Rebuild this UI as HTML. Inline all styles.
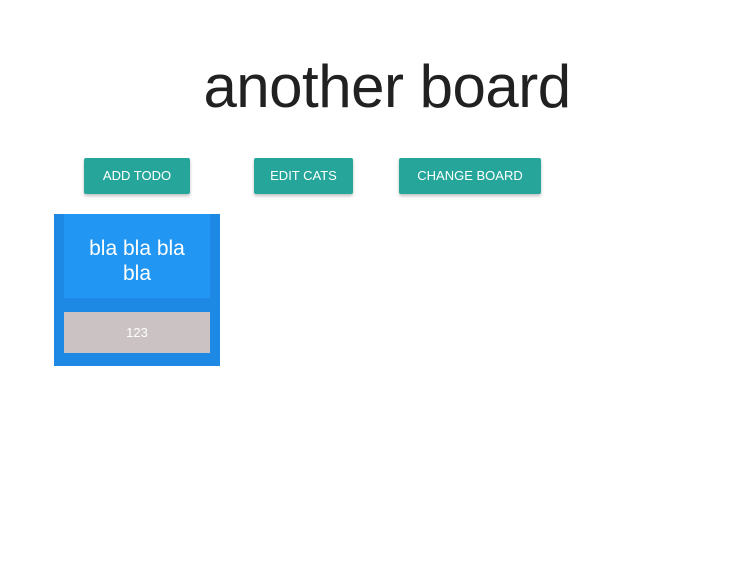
<!DOCTYPE html>
<html><head><meta charset="utf-8"><style>
body{margin:0;width:747px;height:562px;background:#fff;font-family:"Liberation Sans",sans-serif;position:relative;overflow:hidden}
h1{position:absolute;left:0;width:774px;top:52px;margin:0;text-align:center;font-weight:300;font-size:60px;line-height:70px;color:#212121;letter-spacing:-0.5px}
.btn{position:absolute;top:158px;height:36px;background:#26a69a;color:#fff;font-size:13px;line-height:36px;text-align:center;border-radius:2px;box-shadow:0 2px 3px rgba(0,0,0,.25)}
.card{position:absolute;left:54px;top:214px;width:166px;height:152px;background:#1e88e5}
.top{position:absolute;left:10px;top:0;width:146px;height:84px;background:#2196f3;color:#fff;font-size:21px;line-height:25px;text-align:center;box-sizing:border-box;padding-top:22px}
.bot{position:absolute;left:10px;top:98px;width:146px;height:41px;background:#cbc3c3;color:#fff;font-size:13px;line-height:41px;text-align:center}
</style></head><body>
<h1>another board</h1>
<div class="btn" style="left:84px;width:106px">ADD TODO</div>
<div class="btn" style="left:254px;width:99px">EDIT CATS</div>
<div class="btn" style="left:399px;width:142px">CHANGE BOARD</div>
<div class="card"><div class="top">bla bla bla<br>bla</div><div class="bot">123</div></div>
</body></html>
